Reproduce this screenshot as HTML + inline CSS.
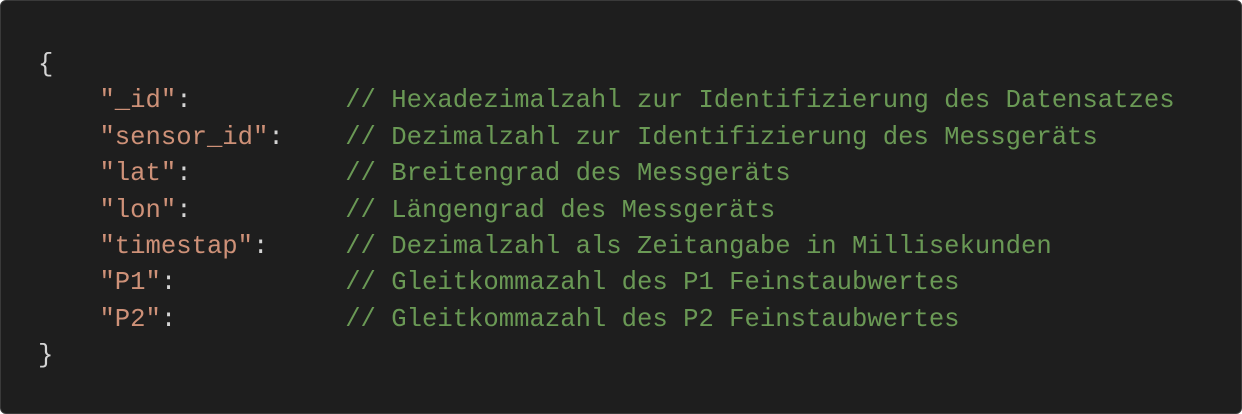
<!DOCTYPE html>
<html><head><style>
html,body{margin:0;padding:0;background:#fff;}
.box{position:absolute;left:0;top:0;width:1240px;height:412px;background:#1e1e1e;border:1px solid #3a3a3a;border-radius:6px;}
pre{position:absolute;left:37px;top:46px;margin:0;font-family:"Liberation Mono",monospace;font-size:25.6px;line-height:36.4px;color:#d4d4d4;}
.s{color:#ce9178}.c{color:#6a9955}
</style></head><body><div class="box"><pre>{
    <span class="s">"_id"</span>:          <span class="c">// Hexadezimalzahl zur Identifizierung des Datensatzes</span>
    <span class="s">"sensor_id"</span>:    <span class="c">// Dezimalzahl zur Identifizierung des Messgeräts</span>
    <span class="s">"lat"</span>:          <span class="c">// Breitengrad des Messgeräts</span>
    <span class="s">"lon"</span>:          <span class="c">// Längengrad des Messgeräts</span>
    <span class="s">"timestap"</span>:     <span class="c">// Dezimalzahl als Zeitangabe in Millisekunden</span>
    <span class="s">"P1"</span>:           <span class="c">// Gleitkommazahl des P1 Feinstaubwertes</span>
    <span class="s">"P2"</span>:           <span class="c">// Gleitkommazahl des P2 Feinstaubwertes</span>
}</pre></div></body></html>
